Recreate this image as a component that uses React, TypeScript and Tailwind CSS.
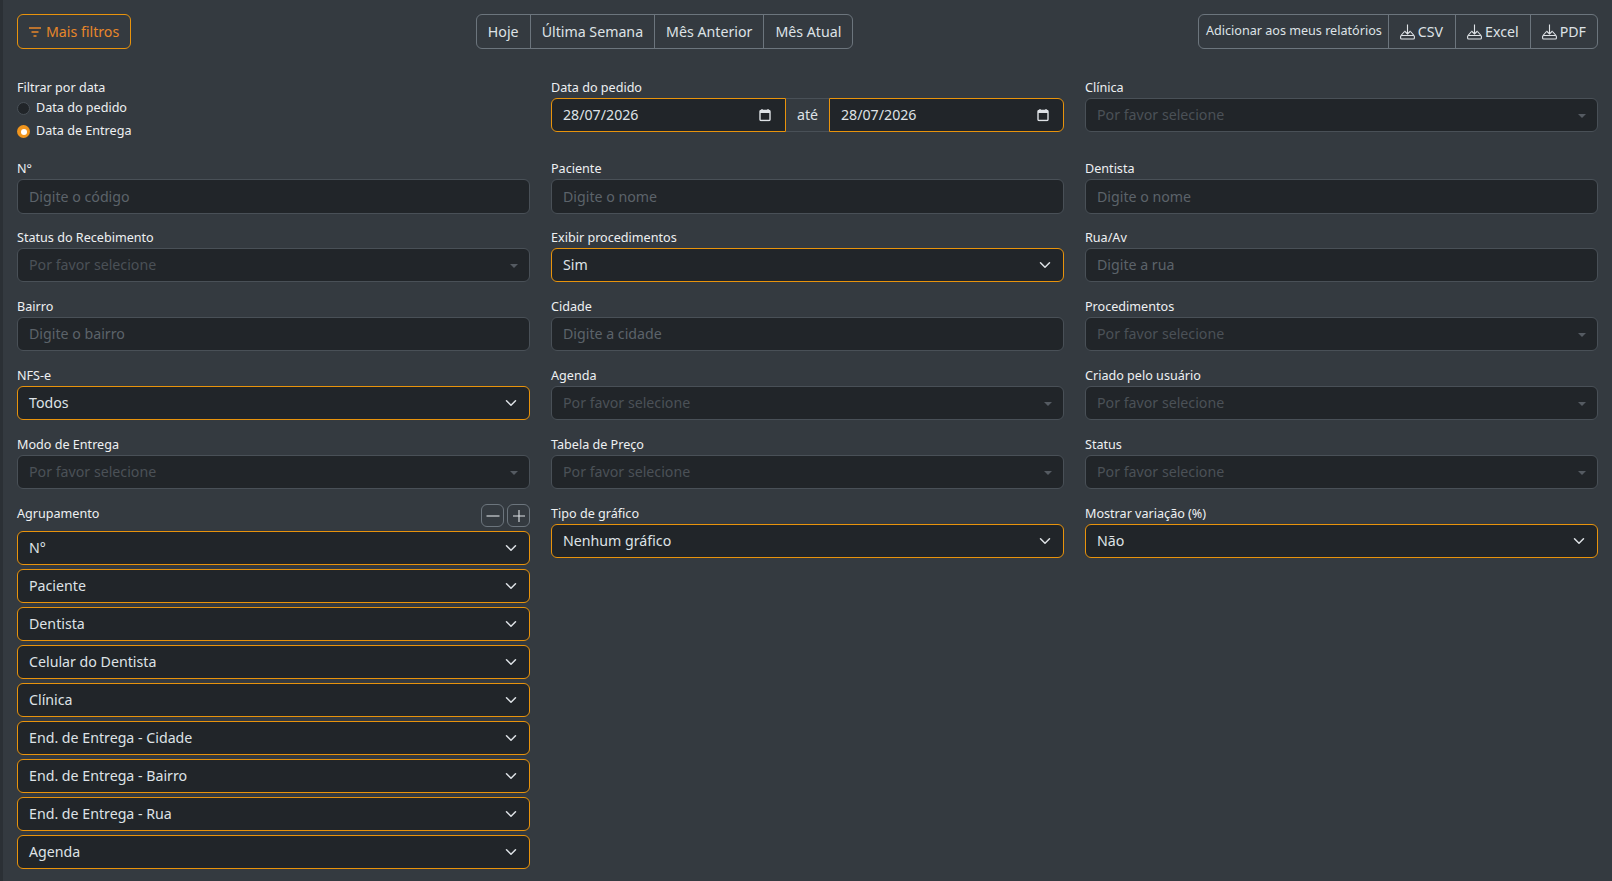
const selectPlaceholder = "Por favor selecione";

function Chevron() {
  return (
    <svg className="absolute right-[12px] top-1/2 -translate-y-1/2 text-[#dee2e6]" width="12" height="12" viewBox="0 0 16 16" fill="none">
      <path d="M2 5l6 6 6-6" stroke="currentColor" strokeWidth="2" strokeLinecap="round" strokeLinejoin="round" />
    </svg>
  );
}

function Caret() {
  return <span className="absolute right-[11px] top-1/2 -translate-y-[1px] h-0 w-0 border-x-[4px] border-t-[4px] border-x-transparent border-t-[#555b62]" />;
}

function FieldLabel({ children }: { children: React.ReactNode }) {
  return <label className="block h-[19px] text-[12.6px] leading-[19px] text-[#eef0f2]">{children}</label>;
}

function TextField({ label, placeholder, tall }: { label: string; placeholder: string; tall?: boolean }) {
  return (
    <div>
      <FieldLabel>{label}</FieldLabel>
      <div className={`mt-[1px] flex items-center rounded-md border border-[#495057] bg-[#212529] px-[11px] text-[14.2px] text-[#5c636a] ${tall ? "-mb-[1px] h-[35px]" : "h-[34px]"}`}>
        {placeholder}
      </div>
    </div>
  );
}

function SelectBox({ value }: { value: string }) {
  return (
    <div className="relative flex h-[34px] items-center rounded-md border border-[#e8930c] bg-[#212529] px-[11px] text-[14.2px] text-[#dee2e6]">
      {value}
      <Chevron />
    </div>
  );
}

function SelectField({ label, value }: { label: string; value: string }) {
  return (
    <div>
      <FieldLabel>{label}</FieldLabel>
      <div className="mt-[1px]">
        <SelectBox value={value} />
      </div>
    </div>
  );
}

function DisabledSelect({ label }: { label: string }) {
  return (
    <div>
      <FieldLabel>{label}</FieldLabel>
      <div className="relative mt-[1px] flex h-[34px] items-center rounded-md border border-[#495057] bg-[#212529] px-[11px] text-[14.2px] text-[#4b5157]">
        {selectPlaceholder}
        <Caret />
      </div>
    </div>
  );
}

function CalendarIcon() {
  return (
    <svg className="absolute right-[14px] top-1/2 -translate-y-1/2" width="12" height="13" viewBox="0 0 12 13" fill="none">
      <rect x="1" y="2" width="10" height="10" rx="1" stroke="#dee2e6" strokeWidth="1.4" />
      <rect x="1" y="2" width="10" height="2.5" fill="#dee2e6" />
      <path d="M3 0.5v2M9 0.5v2" stroke="#dee2e6" strokeWidth="1.2" />
    </svg>
  );
}

function DownloadIcon() {
  return (
    <svg width="15" height="16" viewBox="0 0 15 16" fill="none" stroke="#dee2e6" strokeWidth="1.1">
      <path d="M7.500 0.500v9.500M4.500 7l3 3 3-3" />
      <path d="M4.500 7.500L1 11.500M10.500 7.500l3.500 4" />
      <rect x="0.600" y="11.500" width="13.800" height="3.500" rx="1" />
    </svg>
  );
}

function RangeButton({ children, last }: { children: React.ReactNode; last?: boolean }) {
  return (
    <div className={`flex h-full items-center px-[11px] ${last ? "" : "border-r border-[#6c757d]"}`}>{children}</div>
  );
}

function ExportButton({ children, last }: { children: React.ReactNode; last?: boolean }) {
  return (
    <div className={`flex h-full items-center gap-[3px] pl-[11px] pr-[11px] ${last ? "" : "border-r border-[#6c757d]"}`}>
      <DownloadIcon />
      {children}
    </div>
  );
}

function Radio({ label, checked }: { label: string; checked?: boolean }) {
  return (
    <div className="flex h-[23px] items-center gap-[6px] text-[12.6px] text-[#eef0f2]">
      {checked ? (
        <span className="flex h-[13px] w-[13px] items-center justify-center rounded-full bg-[#f0951d]">
          <span className="h-[6px] w-[6px] rounded-full bg-white" />
        </span>
      ) : (
        <span className="h-[13px] w-[13px] rounded-full border border-[#495057] bg-[#212529]" />
      )}
      {label}
    </div>
  );
}

const groupings = [
  "N°",
  "Paciente",
  "Dentista",
  "Celular do Dentista",
  "Clínica",
  "End. de Entrega - Cidade",
  "End. de Entrega - Bairro",
  "End. de Entrega - Rua",
  "Agenda",
];

export default function App() {
  return (
    <div className="h-[881px] overflow-hidden border-l-[3px] border-[#2b3035] bg-[#343a40] px-[14px] pt-[14px] font-['Noto_Sans',sans-serif] text-[#dee2e6]">
      <div className="flex h-[34px] items-start justify-between">
        <button className="flex h-[35px] items-center gap-[5px] rounded-md border border-[#e8930c] px-[11px] text-[14.2px] text-[#e8872a]">
          <svg width="12" height="10" viewBox="0 0 12 10" stroke="currentColor" strokeWidth="1.5">
            <path d="M0 1h12M2.500 5h7M4.500 9h3" />
          </svg>
          Mais filtros
        </button>
        <div className="flex h-[35px] items-center rounded-md border border-[#6c757d] text-[14.2px]">
          <RangeButton>Hoje</RangeButton>
          <RangeButton>Última Semana</RangeButton>
          <RangeButton>Mês Anterior</RangeButton>
          <RangeButton last>Mês Atual</RangeButton>
        </div>
        <div className="flex h-[35px] items-center rounded-md border border-[#6c757d] text-[14.2px]">
          <div className="flex h-full items-center border-r border-[#6c757d] pb-[1px] pl-[7px] pr-[6px] text-[12.6px]">Adicionar aos meus relatórios</div>
          <ExportButton><span className="mr-[1px]">CSV</span></ExportButton>
          <ExportButton>Excel</ExportButton>
          <ExportButton last>PDF</ExportButton>
        </div>
      </div>

      <div className="mt-[30px] grid grid-cols-3 gap-x-[21px] gap-y-[15px]">
        <div className="h-[66px]">
          <FieldLabel>Filtrar por data</FieldLabel>
          <Radio label="Data do pedido" />
          <Radio label="Data de Entrega" checked />
        </div>
        <div>
          <FieldLabel>Data do pedido</FieldLabel>
          <div className="mt-[1px] flex h-[34px] items-stretch text-[14.2px]">
            <div className="relative flex flex-1 items-center rounded-l-md border border-[#e8930c] bg-[#212529] px-[11px]">
              28/07/2026
              <CalendarIcon />
            </div>
            <div className="flex w-[43px] items-center justify-center border-y border-[#495057] bg-[#343a40]">até</div>
            <div className="relative flex flex-1 items-center rounded-r-md border border-[#e8930c] bg-[#212529] px-[11px]">
              28/07/2026
              <CalendarIcon />
            </div>
          </div>
        </div>
        <DisabledSelect label="Clínica" />

        <TextField label="N°" placeholder="Digite o código" tall />
        <TextField label="Paciente" placeholder="Digite o nome" tall />
        <TextField label="Dentista" placeholder="Digite o nome" tall />

        <DisabledSelect label="Status do Recebimento" />
        <SelectField label="Exibir procedimentos" value="Sim" />
        <TextField label="Rua/Av" placeholder="Digite a rua" />

        <TextField label="Bairro" placeholder="Digite o bairro" />
        <TextField label="Cidade" placeholder="Digite a cidade" />
        <DisabledSelect label="Procedimentos" />

        <SelectField label="NFS-e" value="Todos" />
        <DisabledSelect label="Agenda" />
        <DisabledSelect label="Criado pelo usuário" />

        <DisabledSelect label="Modo de Entrega" />
        <DisabledSelect label="Tabela de Preço" />
        <DisabledSelect label="Status" />

        <div>
          <div className="flex h-[23px] items-start justify-between">
            <span className="text-[12.6px] leading-[19px] text-[#eef0f2]">Agrupamento</span>
            <div className="flex gap-[3px]">
              <span className="flex h-[23px] w-[23px] items-center justify-center rounded-md border border-[#6c757d]">
                <svg width="14" height="14" viewBox="0 0 14 14" stroke="#dee2e6" strokeWidth="1.1"><path d="M0.500 7h13" /></svg>
              </span>
              <span className="flex h-[23px] w-[23px] items-center justify-center rounded-md border border-[#6c757d]">
                <svg width="14" height="14" viewBox="0 0 14 14" stroke="#dee2e6" strokeWidth="1.1"><path d="M1 7h12M7 1v12" /></svg>
              </span>
            </div>
          </div>
          <div className="mt-[4px] flex flex-col gap-[4px]">
            {groupings.map((g) => (
              <SelectBox key={g} value={g} />
            ))}
          </div>
        </div>
        <SelectField label="Tipo de gráfico" value="Nenhum gráfico" />
        <SelectField label="Mostrar variação (%)" value="Não" />
      </div>
    </div>
  );
}
